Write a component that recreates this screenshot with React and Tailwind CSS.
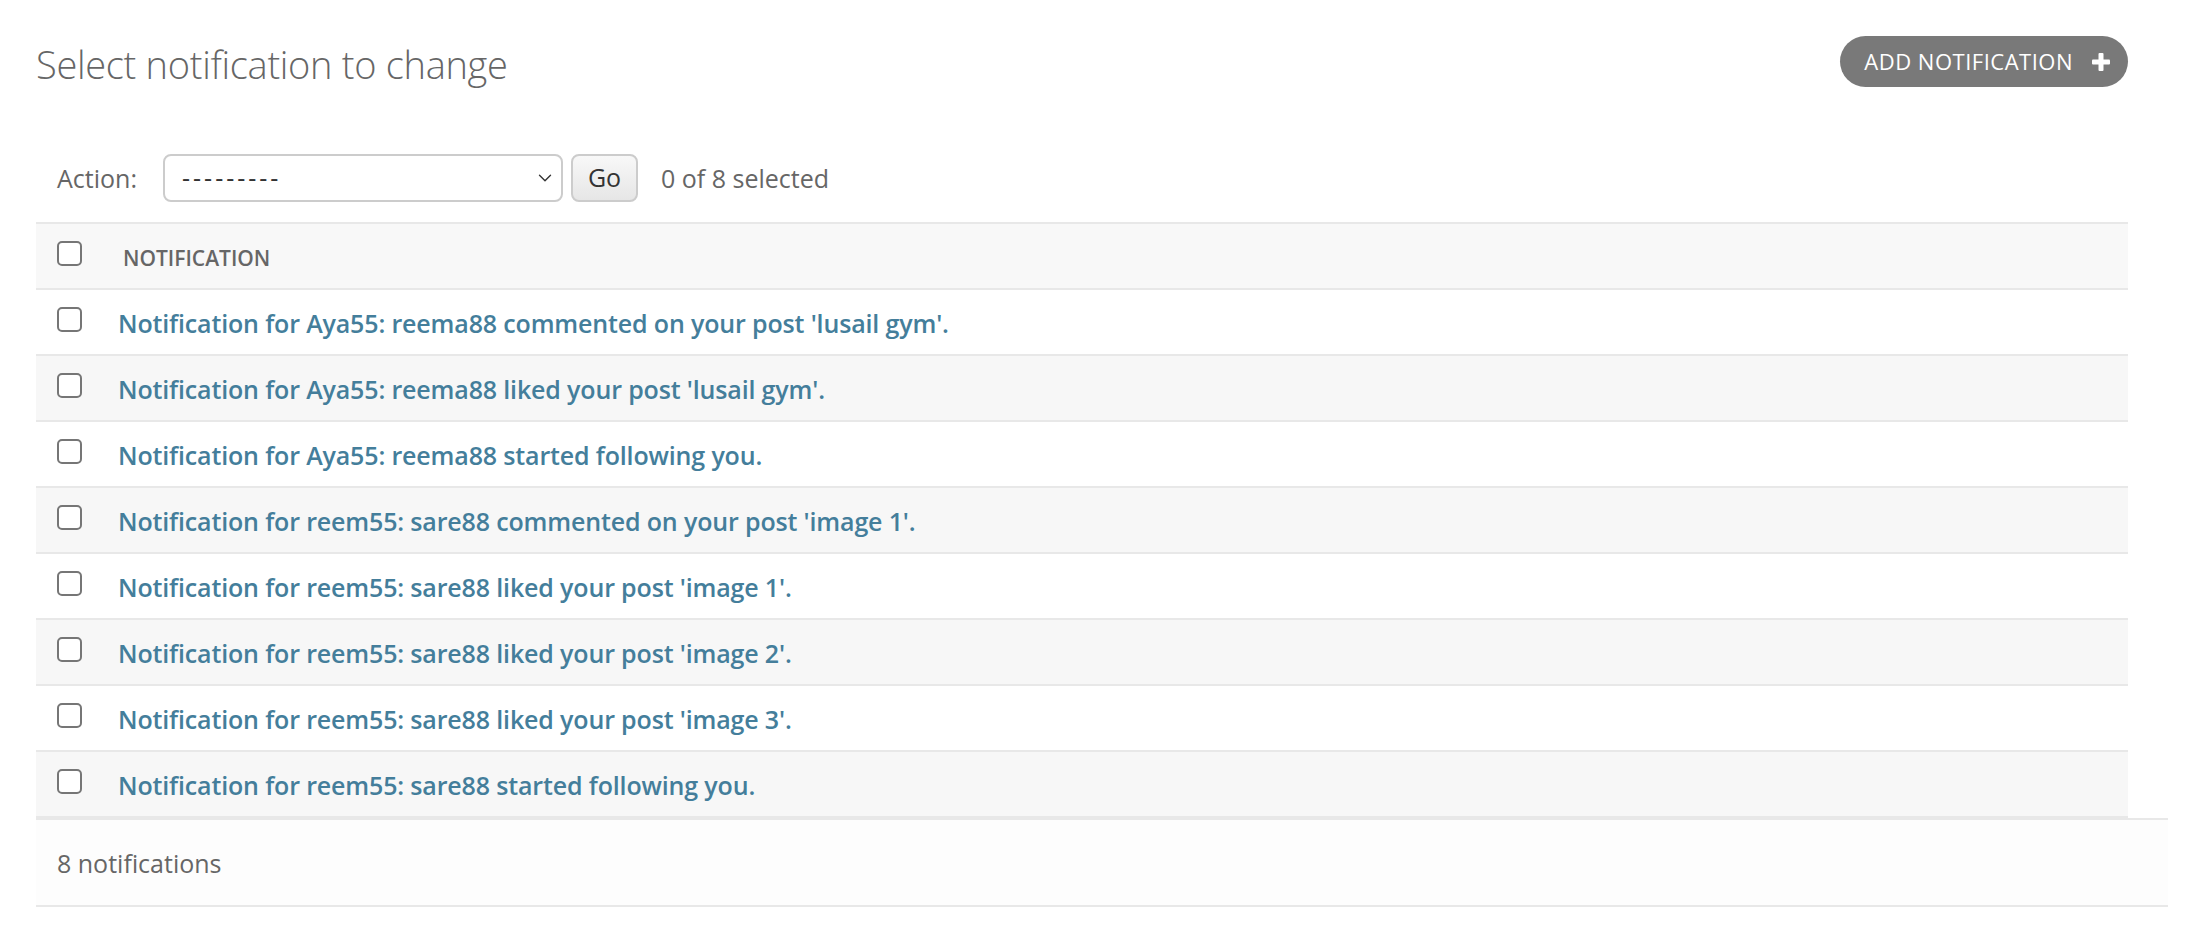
import { ChevronDown } from 'lucide-react';

const notifications = [
  "Notification for Aya55: reema88 commented on your post 'lusail gym'.",
  "Notification for Aya55: reema88 liked your post 'lusail gym'.",
  "Notification for Aya55: reema88 started following you.",
  "Notification for reem55: sare88 commented on your post 'image 1'.",
  "Notification for reem55: sare88 liked your post 'image 1'.",
  "Notification for reem55: sare88 liked your post 'image 2'.",
  "Notification for reem55: sare88 liked your post 'image 3'.",
  "Notification for reem55: sare88 started following you.",
];

function Checkbox() {
  return <span className="block w-[25px] h-[25px] mb-[6px] border-2 border-[#767676] rounded-[5px] bg-white" />;
}

function PlusIcon() {
  return (
    <svg width="20" height="20" viewBox="0 0 20 20" className="shrink-0">
      <rect x="7.5" y="1" width="5" height="18" rx="1" fill="#fff" />
      <rect x="1" y="7.5" width="18" height="5" rx="1" fill="#fff" />
    </svg>
  );
}

export default function App() {
  return (
    <div className="w-full min-h-[936px] bg-white font-['Open_Sans',sans-serif] text-[#333]">
      <div className="pl-[36px] pr-[18px] pt-[36px]">

        {/* Header */}
        <div className="flex items-start justify-between mr-[40px]">
          <h1 className="mt-[3px] text-[38px] leading-[51px] font-light tracking-[-0.3px] text-[#666]">Select notification to change</h1>
          <a className="flex items-center h-[51px] pl-[24px] pr-[17px] rounded-full bg-[#797979] text-white text-[22px] tracking-[0.5px] uppercase">
            <span>Add notification</span>
            <span className="ml-[18px]"><PlusIcon /></span>
          </a>
        </div>

        {/* Actions */}
        <div className="flex items-center h-[48px] mt-[64px] text-[25px]">
          <label className="w-[127px] pl-[21px] mt-[2px] text-[#666]">Action:</label>
          <div className="flex items-center justify-between w-[400px] h-[48px] pl-[17px] pr-[5px] border-2 border-[#ccc] rounded-[8px] bg-white">
            <span className="text-[#333] tracking-[3px]">---------</span>
            <ChevronDown size={22} strokeWidth={1.5} className="text-[#333]" />
          </div>
          <button className="ml-[8px] w-[67px] h-[48px] border-2 border-[#ccc] rounded-[8px] bg-gradient-to-b from-[#f8f8f8] to-[#e6e6e6] text-[#333]">Go</button>
          <span className="ml-[23px] mt-[2px] text-[#666]">0 of 8 selected</span>
        </div>

        {/* Result list */}
        <div className="mt-[20px] mr-[40px]">
          <div className="flex items-center h-[68px] border-t-2 border-b-2 border-[#e8e8e8] bg-[#f8f8f8]">
            <div className="w-[83px] pl-[21px]"><Checkbox /></div>
            <span className="pl-[4px] mt-[6px] text-[21px] font-semibold text-[#666] uppercase">Notification</span>
          </div>
          {notifications.map((text, i) => (
            <div
              key={text}
              className={`flex items-center h-[66px] border-b-2 border-[#e8e8e8] ${i % 2 === 1 ? 'bg-[#f7f7f7]' : 'bg-white'}`}
            >
              <div className="w-[82px] pl-[21px]"><Checkbox /></div>
              <a className="mt-[3px] text-[25px] font-semibold tracking-[-0.15px] text-[#447e9b]">{text}</a>
            </div>
          ))}
        </div>

        {/* Paginator */}
        <div className="flex items-center h-[89px] pl-[21px] border-t-2 border-b-2 border-[#e8e8e8] bg-[#fdfdfd] text-[25px] text-[#666]">
          <span className="mt-[2px]">8 notifications</span>
        </div>
      </div>
    </div>
  );
}
